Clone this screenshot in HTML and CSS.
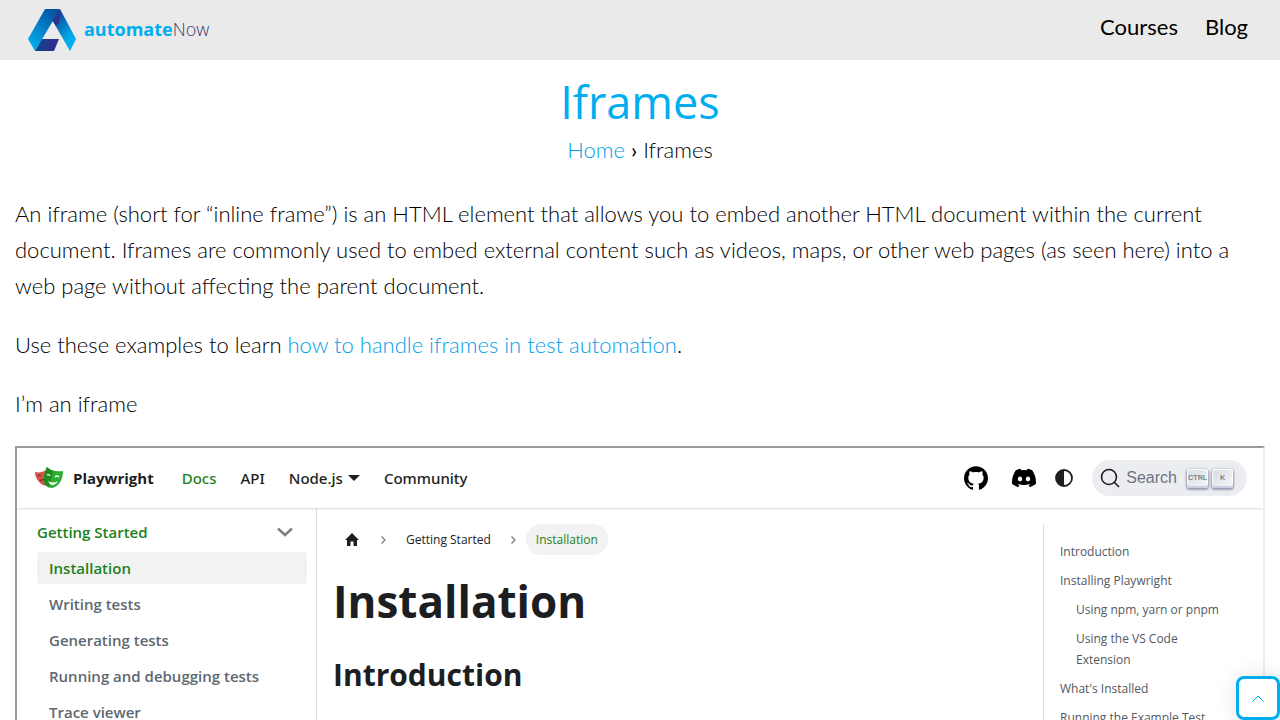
FILE: index.html
```html
<!DOCTYPE html>
<html lang="en">
<head>
<meta charset="utf-8">
<meta name="viewport" content="width=device-width, initial-scale=1">
<title>Iframes | automateNow</title>
<link rel="stylesheet" href="styles.css">
</head>
<body>
<header class="site-header">
  <a class="brand" href="#">
    <svg class="brand-mark" viewBox="0 0 48 42" aria-hidden="true">
      <defs>
        <linearGradient id="leg-left" x1="0.8" y1="0" x2="0.2" y2="0.9"><stop offset="0" stop-color="#06509f"/><stop offset="1" stop-color="#00a9ec"/></linearGradient>
        <linearGradient id="leg-right" x1="0.2" y1="0" x2="0.7" y2="0.9"><stop offset="0" stop-color="#2b3390"/><stop offset="0.3" stop-color="#0a62b0"/><stop offset="0.85" stop-color="#00aeef"/></linearGradient>
        <linearGradient id="foot" x1="0" y1="0" x2="1" y2="0"><stop offset="0" stop-color="#064a86"/><stop offset="0.6" stop-color="#2b3390"/></linearGradient>
      </defs>
      <path d="M17 0H32L7 42L0 30Z" fill="url(#leg-left)"/>
      <path d="M32 0L48 30L42 42L24.500 11.500Z" fill="url(#leg-right)"/>
      <path d="M32 0L31 14L28 17L24.500 11.500Z" fill="#2b3390"/>
      <path d="M14 30H31L26 42H7Z" fill="url(#foot)"/>
    </svg>
    <span class="brand-name"><b>automate</b>Now</span>
  </a>
  <nav class="site-nav" aria-label="Main">
    <a href="#">Courses</a>
    <a href="#">Blog</a>
  </nav>
</header>

<main class="page">
  <h1 class="page-title">Iframes</h1>
  <nav class="crumbs" aria-label="Breadcrumb"><a href="#">Home</a> <b>›</b> <span>Iframes</span></nav>
  <div class="copy">
    <p>An iframe (short for “inline frame”) is an HTML element that allows you to embed another HTML document within the current document. Iframes are commonly used to embed external content such as videos, maps, or other web pages (as seen here) into a web page without affecting the parent document.</p>
    <p>Use these examples to learn <a href="#">how to handle iframes in test automation</a>.</p>
    <p>I’m an iframe</p>
  </div>

  <section class="frame" aria-label="Playwright documentation">
    <div class="docs-bar">
      <a class="docs-brand" href="#">
        <svg class="masks" viewBox="0 0 28 22" aria-hidden="true">
          <path d="M0 5C4 6 8 5 11 3L13 17C10 20 7 18 4 15C1 12 0 8 0 5Z" fill="#d65348"/>
          <path d="M3 9q2-1 3 0M5 14q2-2 5-1" fill="none" stroke="#7a2a28" stroke-width="1.200"/>
          <path d="M12 0C16 4 22 5 28 4C28 11 25 18 19 20.500C15 22 10 19 9 15C8.500 10 10 4 12 0Z" fill="#2ead33"/>
          <path d="M12 0C14 2 16 3 18 4L14 20.500C11 19 9 17 9 15C8.500 10 10 4 12 0Z" fill="#1d8d22"/>
          <path d="M12 8q2-1 3 1M20 10q2-2 4 0" fill="none" stroke="#fff" stroke-width="1.200"/>
          <path d="M13 14Q18 17 23 14Q21 18 17 18Q14 17 13 14Z" fill="#fff"/>
        </svg>
        <b>Playwright</b>
      </a>
      <nav class="docs-nav" aria-label="Documentation">
        <a class="active" href="#">Docs</a>
        <a href="#">API</a>
        <a class="has-menu" href="#">Node.js</a>
        <a href="#">Community</a>
      </nav>
      <div class="docs-tools">
        <a class="icon-link" href="#" aria-label="GitHub"><svg viewBox="0 0 24 24"><path d="M12 .297c-6.630 0-12 5.373-12 12 0 5.303 3.438 9.800 8.205 11.385.6.113.82-.258.82-.577 0-.285-.01-1.040-.015-2.040-3.338.724-4.042-1.610-4.042-1.610C4.422 18.070 3.633 17.700 3.633 17.700c-1.087-.744.084-.729.084-.729 1.205.084 1.838 1.236 1.838 1.236 1.070 1.835 2.809 1.305 3.495.998.108-.776.417-1.305.76-1.605-2.665-.3-5.466-1.332-5.466-5.930 0-1.310.465-2.380 1.235-3.220-.135-.303-.54-1.523.105-3.176 0 0 1.005-.322 3.300 1.230.96-.267 1.980-.399 3-.405 1.020.006 2.040.138 3 .405 2.280-1.552 3.285-1.230 3.285-1.230.645 1.653.24 2.873.12 3.176.765.84 1.230 1.910 1.230 3.220 0 4.610-2.805 5.625-5.475 5.920.42.36.81 1.096.81 2.220 0 1.606-.015 2.896-.015 3.286 0 .315.21.69.825.57C20.565 22.092 24 17.592 24 12.297c0-6.627-5.373-12-12-12"/></svg></a>
        <a class="icon-link" href="#" aria-label="Discord"><svg viewBox="0 0 24 24"><path d="M20.317 4.370a19.790 19.790 0 0 0-4.885-1.515.074.074 0 0 0-.079.037c-.211.375-.445.865-.608 1.250-1.845-.276-3.680-.276-5.487 0-.164-.393-.406-.874-.618-1.250a.077.077 0 0 0-.079-.037 19.740 19.740 0 0 0-4.885 1.515.07.07 0 0 0-.032.028C.533 9.046-.319 13.580.099 18.058a.082.082 0 0 0 .031.056c2.053 1.508 4.041 2.423 5.993 3.029a.078.078 0 0 0 .084-.028c.462-.63.873-1.295 1.226-1.994a.076.076 0 0 0-.042-.106c-.653-.248-1.274-.55-1.872-.892a.077.077 0 0 1-.008-.128c.126-.094.252-.192.372-.291a.074.074 0 0 1 .078-.011c3.928 1.793 8.180 1.793 12.061 0a.074.074 0 0 1 .079.010c.12.099.246.198.373.292a.077.077 0 0 1-.007.128 12.300 12.300 0 0 1-1.873.891.077.077 0 0 0-.041.107c.36.698.772 1.363 1.225 1.993a.076.076 0 0 0 .084.029c1.961-.607 3.950-1.522 6.002-3.029a.077.077 0 0 0 .031-.055c.5-5.177-.838-9.674-3.549-13.660a.061.061 0 0 0-.031-.029zM8.020 15.331c-1.183 0-2.157-1.086-2.157-2.419 0-1.333.956-2.419 2.157-2.419 1.211 0 2.176 1.095 2.157 2.419 0 1.333-.956 2.419-2.157 2.419zm7.975 0c-1.183 0-2.157-1.086-2.157-2.419 0-1.333.955-2.419 2.157-2.419 1.211 0 2.176 1.095 2.157 2.419 0 1.333-.946 2.419-2.157 2.419z"/></svg></a>
        <button class="theme" type="button" aria-label="Switch colour mode"><svg viewBox="0 0 18 18"><circle cx="9" cy="9" r="8" fill="none" stroke="#1c1e21" stroke-width="1.800"/><path d="M9 1A8 8 0 0 0 9 17Z" fill="#1c1e21"/></svg></button>
        <button class="search" type="button">
          <svg class="lens" viewBox="0 0 20 20" aria-hidden="true"><circle cx="9" cy="9" r="7.500"/><path d="M14.300 14.300L19 19"/></svg>
          <span>Search</span>
          <span class="keys"><kbd>CTRL</kbd><kbd>K</kbd></span>
        </button>
      </div>
    </div>

    <div class="docs-body">
      <aside class="sidebar">
        <button class="group" type="button">Getting Started
          <svg viewBox="0 0 16 10" aria-hidden="true"><path d="M1 1.500L8 8L15 1.500"/></svg>
        </button>
        <ul>
          <li><a class="active" href="#">Installation</a></li>
          <li><a href="#">Writing tests</a></li>
          <li><a href="#">Generating tests</a></li>
          <li><a href="#">Running and debugging tests</a></li>
          <li><a href="#">Trace viewer</a></li>
        </ul>
      </aside>
      <article class="doc">
        <nav class="trail" aria-label="Docs breadcrumb">
          <a href="#" aria-label="Home page"><svg class="home" viewBox="0 0 14 13"><path d="M7 0L14 7H12V13H8.500V8.500H5.500V13H2V7H0Z"/></svg></a>
          <svg class="sep" viewBox="0 0 5 8" aria-hidden="true"><path d="M.5.5L4 4L.5 7.500"/></svg>
          <a href="#">Getting Started</a>
          <svg class="sep" viewBox="0 0 5 8" aria-hidden="true"><path d="M.5.5L4 4L.5 7.500"/></svg>
          <span class="current">Installation</span>
        </nav>
        <h1>Installation</h1>
        <h2>Introduction</h2>
      </article>
      <nav class="toc" aria-label="On this page">
        <ul>
          <li><a href="#">Introduction</a></li>
          <li><a href="#">Installing Playwright</a>
            <ul>
              <li><a href="#">Using npm, yarn or pnpm</a></li>
              <li><a href="#">Using the VS Code Extension</a></li>
            </ul>
          </li>
          <li><a href="#">What's Installed</a></li>
          <li><a href="#">Running the Example Test</a></li>
        </ul>
      </nav>
    </div>
  </section>
</main>

<button class="to-top" type="button" aria-label="Back to top"><svg viewBox="0 0 12 7"><path d="M.5 6.500L6 1L11.500 6.500"/></svg></button>
</body>
</html>
```
FILE: styles.css
```css
* { box-sizing: border-box; }
body { margin: 0; background: #fff; color: #000; font-family: Lato, sans-serif; }
a { color: inherit; text-decoration: none; }
button { font: inherit; color: inherit; border: 0; padding: 0; background: none; cursor: pointer; }
ul { list-style: none; margin: 0; padding: 0; }
svg { display: block; }

.site-header { display: flex; align-items: center; justify-content: space-between; height: 60px; padding: 0 32px 0 28px; background: #eaeaea; }
.brand { display: flex; align-items: center; gap: 8px; }
.brand-mark { width: 48px; height: 42px; }
.brand-name { padding-bottom: 2px; font: 300 18px/24px "Open Sans", sans-serif; color: #3f3a6b; }
.brand-name b { font-weight: 700; color: #00aeef; }
.site-nav { display: flex; gap: 27px; padding-bottom: 6px; font-size: 22px; line-height: 28px; font-weight: 400; }

.page { padding: 12px 15px 0; }
.page-title { margin: 0; text-align: center; font: 400 45px/60px "Open Sans", sans-serif; color: #00aeef; }
.crumbs { text-align: center; font-size: 22px; line-height: 36px; font-weight: 300; }
.crumbs a, .copy a { color: #00a0e9; }
.copy { padding-top: 28px; font-size: 22px; line-height: 36px; font-weight: 300; }
.copy p { margin: 0 0 23px; }
.copy p:last-child { margin-bottom: 24px; }

.frame { border: 2px solid; border-color: #9a9a9a #eee #eee #9a9a9a; font-family: "Open Sans", sans-serif; color: #1c1e21; height: 600px; overflow: hidden; }
.docs-bar { position: relative; display: flex; align-items: center; height: 60px; padding: 0 16px 0 18px; box-shadow: 0 1px 2px rgba(0, 0, 0, .15); font-size: 15px; line-height: 24px; }
.docs-brand { display: flex; align-items: center; gap: 10px; margin-right: 28px; }
.masks { width: 28px; height: 22px; }
.docs-nav { display: flex; gap: 24px; font-family: "Noto Sans", sans-serif; font-weight: 500; }
.active { color: #1d8121; }
.has-menu { display: flex; align-items: center; gap: 5px; }
.has-menu::after { content: ""; border: 6px solid transparent; border-top-color: currentColor; border-bottom: 0; }
.docs-tools { display: flex; align-items: center; margin-left: auto; }
.icon-link { margin-right: 24px; color: #000; }
.icon-link svg { width: 24px; height: 24px; fill: currentColor; }
.icon-link + .theme { margin: 0 19px 0 -5px; }
.theme svg { width: 18px; height: 18px; }
.search { display: flex; align-items: center; gap: 6px; height: 36px; padding: 0 14px 0 8px; border-radius: 18px; background: #ebedf0; color: #6f7480; font: 16px/20px "Liberation Sans", sans-serif; }
.lens { width: 20px; height: 20px; fill: none; stroke: #1c1e21; stroke-width: 1.6; }
.keys { display: flex; gap: 4px; margin-left: 4px; }
kbd { display: flex; align-items: center; justify-content: center; width: 21px; height: 19px; border-radius: 3px; background: linear-gradient(135deg, #d5dbe4, #f8f8f8); box-shadow: inset 0 -2px #cdcde6, inset 0 0 1px 1px #fff, 0 1px 2px 1px rgba(30, 35, 90, .4); font: 8px/12px Roboto, sans-serif; color: #555b68; }

.docs-body { display: grid; grid-template-columns: 300px minmax(0, 1fr) 220px; height: 538px; }
.sidebar { border-right: 1px solid #dadde1; padding: 8px 9px 8px 20px; font-size: 15px; line-height: 20px; font-weight: 600; color: #606770; }
.group { display: flex; align-items: center; justify-content: space-between; width: 100%; height: 32px; padding-right: 14px; color: #1d8121; }
.group svg { width: 16px; height: 10px; fill: none; stroke: #808080; stroke-width: 2.4; }
.sidebar li { margin-top: 4px; }
.sidebar li a { display: block; padding: 6px 12px; border-radius: 4px; }
.sidebar li .active { background: #f2f2f2; }

.doc { padding: 16px; }
.trail { display: flex; align-items: center; font-size: 12px; line-height: 21px; }
.trail a, .current { padding: 5px 10px; border-radius: 16px; }
.current { background: #f2f2f2; color: #1d8121; }
.home { width: 14px; height: 13px; fill: #1c1e21; }
.sep { width: 5px; height: 8px; margin: 0 10px; fill: none; stroke: #777; stroke-width: 1.2; }
.trail a:first-child { padding: 5px 12px; }
.doc h1 { margin: 16px 0 24px; font-size: 44px; line-height: 60px; }
.doc h2 { margin: 0; font-size: 30px; line-height: 40px; }

.toc { margin-top: 16px; padding: 17px 32px 17px 16px; border-left: 1px solid #dadde1; font-size: 12px; line-height: 21px; color: #525860; }
.toc li { margin: 8px 0; }
.toc > ul { margin-top: -8px; }
.toc ul ul { padding-left: 16px; }

.to-top { position: fixed; right: 0; bottom: 0; display: grid; place-items: center; width: 44px; height: 44px; border: 3px solid #00aeef; border-radius: 8px; background: rgba(255, 255, 255, .85); box-shadow: 0 0 20px rgba(0, 0, 0, .12); }
.to-top svg { width: 12px; height: 7px; fill: none; stroke: #00aeef; }
```
